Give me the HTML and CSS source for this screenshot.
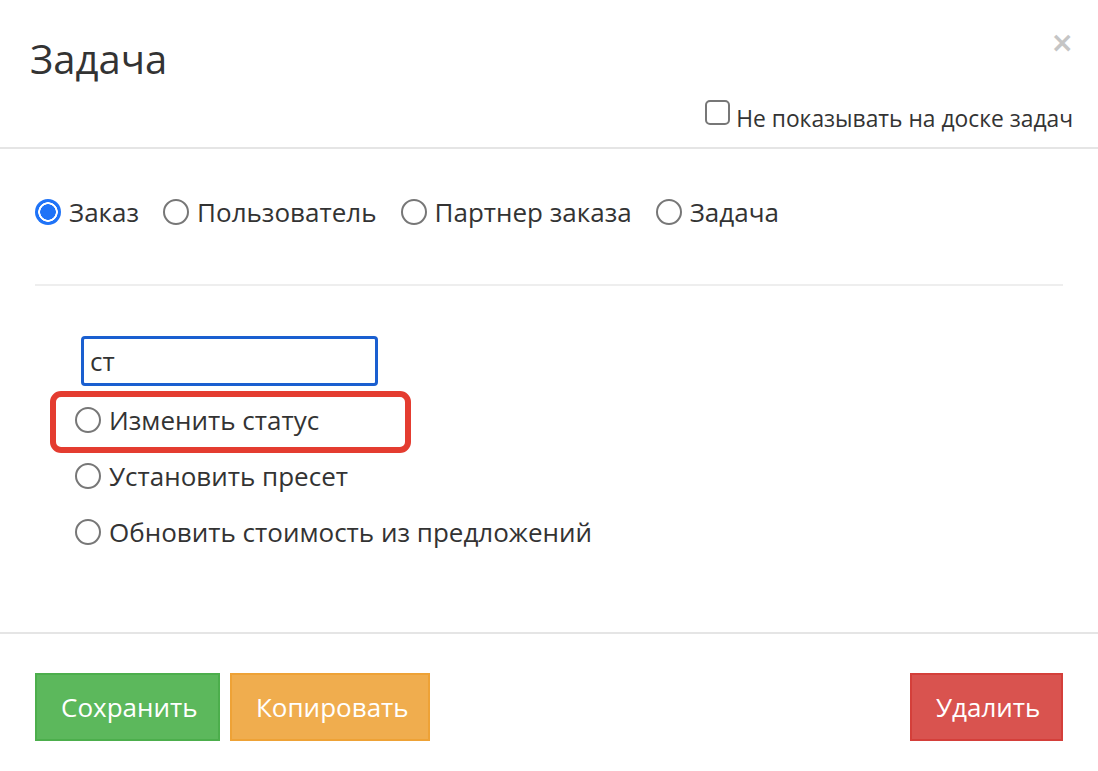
FILE: index.html
```html
<!DOCTYPE html>
<html lang="ru">
<head>
<meta charset="utf-8">
<title>Задача</title>
<link rel="stylesheet" href="styles.css">
</head>
<body>
<div class="modal">
  <div class="modal-header">
    <div class="title-row">
      <h1 class="title">Задача</h1>
      <span class="close">&times;</span>
    </div>
    <label class="check-row">
      <input type="checkbox" class="checkbox">
      <span class="check-text">Не показывать на доске задач</span>
    </label>
  </div>
  <div class="modal-body">
    <div class="type-row">
      <label class="radio-label"><input type="radio" name="type" class="radio" checked><span>Заказ</span></label>
      <label class="radio-label"><input type="radio" name="type" class="radio"><span>Пользователь</span></label>
      <label class="radio-label"><input type="radio" name="type" class="radio"><span>Партнер заказа</span></label>
      <label class="radio-label"><input type="radio" name="type" class="radio"><span>Задача</span></label>
    </div>
    <div class="divider"></div>
    <div class="actions">
      <input type="text" class="search" value="ст">
      <div class="option highlighted">
        <label class="radio-label"><input type="radio" name="action" class="radio"><span>Изменить статус</span></label>
        <div class="highlight"></div>
      </div>
      <div class="option">
        <label class="radio-label"><input type="radio" name="action" class="radio"><span>Установить пресет</span></label>
      </div>
      <div class="option">
        <label class="radio-label"><input type="radio" name="action" class="radio"><span>Обновить стоимость из предложений</span></label>
      </div>
    </div>
  </div>
  <div class="modal-footer">
    <div class="left-buttons">
      <button class="btn btn-success">Сохранить</button>
      <button class="btn btn-warning">Копировать</button>
    </div>
    <button class="btn btn-danger">Удалить</button>
  </div>
</div>
</body>
</html>
```

FILE: styles.css
```css
* { box-sizing: border-box; }
html, body { margin: 0; padding: 0; background: #fff; }
body {
  font-family: "Open Sans", "Noto Sans", sans-serif;
  color: #333;
  width: 1098px;
  height: 771px;
  overflow: hidden;
}
.modal { display: flex; flex-direction: column; }

.modal-header {
  height: 149px;
  border-bottom: 2px solid #e5e5e5;
  padding: 0 25px 0 30px;
  display: flex;
  flex-direction: column;
}
.title-row {
  display: flex;
  justify-content: space-between;
  align-items: flex-start;
  padding-top: 30px;
}
.title {
  margin: 0;
  font-size: 40px;
  font-weight: 400;
  line-height: 58px;
  color: #333;
}
.close {
  font-family: "DejaVu Sans", sans-serif;
  font-size: 28px;
  font-weight: 700;
  color: #c5c5c5;
  line-height: 24px;
  margin-top: 1px;
  margin-right: -1px;
}
.check-row {
  margin-top: auto;
  margin-bottom: 21px;
  align-self: flex-end;
  display: flex;
  align-items: flex-end;
  gap: 6px;
  font-size: 22.8px;
  line-height: 28px;
}
.check-text { position: relative; top: 7px; }
.checkbox {
  appearance: none;
  -webkit-appearance: none;
  margin: 0 0 1px;
  width: 25px;
  height: 25px;
  border: 2px solid #777;
  border-radius: 5px;
  background: #fff;
}

.modal-body {
  padding: 0 35px 72px;
}
.type-row {
  margin-top: 49px;
  height: 28px;
  display: flex;
  align-items: center;
  gap: 24px;
}
.radio-label {
  display: flex;
  align-items: center;
  gap: 8px;
  font-size: 26px;
  line-height: 28px;
  white-space: nowrap;
}
.radio {
  appearance: none;
  -webkit-appearance: none;
  margin: 0;
  width: 26px;
  height: 26px;
  border-radius: 50%;
  border: 2px solid #777;
  background: #fff;
  flex: none;
}
.radio:checked {
  border: none;
  background: radial-gradient(circle, #1f73f7 0 7.5px, #fff 8px 9.5px, #1f73f7 10px);
}
.divider {
  margin-top: 58px;
  height: 2px;
  background: #eeeeee;
}
.actions {
  padding-left: 40px;
  padding-top: 50px;
}
.search {
  display: block;
  margin-left: 6px;
  width: 297px;
  height: 50px;
  border: 3px solid #1a5fd0;
  border-radius: 4px;
  padding: 0 6px;
  font-family: inherit;
  font-size: 26px;
  color: #333;
  outline: none;
}
.option {
  position: relative;
  height: 56px;
  display: flex;
  align-items: center;
}
.option.highlighted { margin-top: 6px; }
.highlight {
  position: absolute;
  left: -25px;
  top: -1px;
  width: 361px;
  height: 62px;
  border: 6px solid #e43c30;
  border-radius: 11px;
  pointer-events: none;
}

.modal-footer {
  border-top: 2px solid #e5e5e5;
  padding: 39px 35px 0;
  display: flex;
  justify-content: space-between;
}
.left-buttons { display: flex; gap: 10px; }
.btn {
  height: 68px;
  border: 2px solid;
  border-radius: 0;
  color: #fff;
  font-family: inherit;
  font-size: 26px;
  padding: 0 24px;
}
.btn-success { background: #5cb85c; border-color: #4cae4c; width: 185px; }
.btn-warning { background: #f0ad4e; border-color: #eea236; width: 200px; }
.btn-danger { background: #d9534f; border-color: #d43f3a; width: 153px; }
```
